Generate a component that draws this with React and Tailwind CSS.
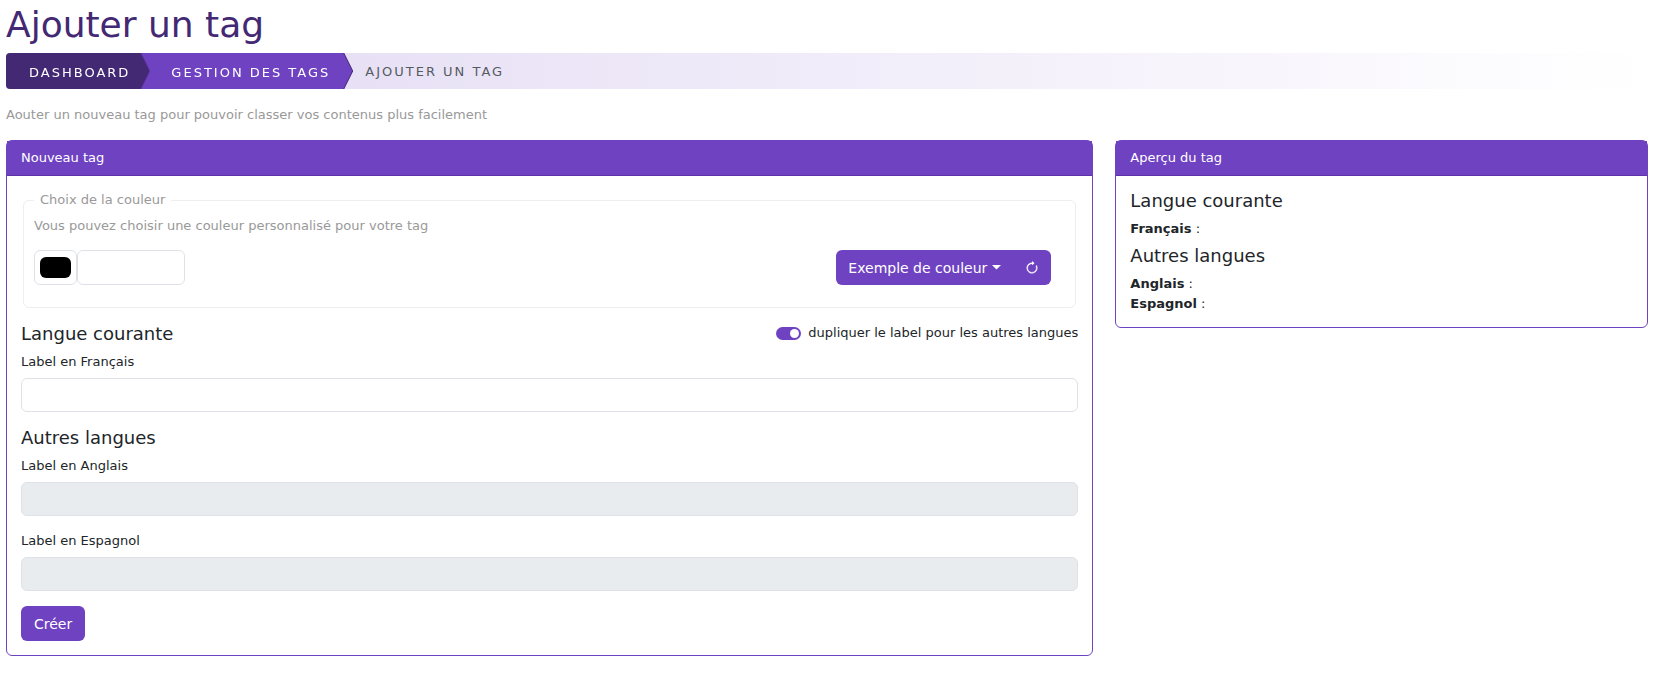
import { useState } from "react";

function Card({ title, children }) {
  return (
    <section className="self-start rounded-md border border-[#6f42c1] bg-white">
      <h2 className="border-b border-[#5c34a8] bg-[#6f42c1] px-3.5 py-2 text-[13px] leading-[18px] text-white">
        {title}
      </h2>
      {children}
    </section>
  );
}

function Subtitle({ children }) {
  return <h3 className="text-lg leading-5">{children}</h3>;
}

function Field({ id, label, disabled }) {
  return (
    <div>
      <label htmlFor={id} className="block leading-5">
        {label}
      </label>
      <input
        id={id}
        type="text"
        disabled={disabled}
        className="mt-1.5 block h-[34px] w-full rounded-md border border-[#dee2e6] bg-white px-3 text-sm disabled:bg-[#e9ecef]"
      />
    </div>
  );
}

function Crumbs() {
  return (
    <nav
      aria-label="Fil d'Ariane"
      className="h-9 overflow-hidden rounded-sm bg-linear-to-r from-[#e2d9f3] to-white text-[13px] leading-9 tracking-[2px] uppercase"
    >
      <ol className="flex">
        <li className="z-20 flex drop-shadow-[1px_0_0_#59359a]">
          <a
            href="#dashboard"
            className="bg-[#432874] pt-[3px] pr-[19px] pl-[23px] leading-[33px] text-white [clip-path:polygon(0_0,calc(100%-9px)_0,100%_50%,calc(100%-9px)_100%,0_100%)]"
          >
            Dashboard
          </a>
        </li>
        <li className="z-10 -ml-2.5 flex drop-shadow-[1px_0_0_#432874]">
          <a
            href="#tags"
            className="bg-[#6f42c1] pt-[3px] pr-[22px] pl-8 leading-[33px] text-white [clip-path:polygon(0_0,calc(100%-9px)_0,100%_50%,calc(100%-9px)_100%,0_100%)]"
          >
            Gestion des tags
          </a>
        </li>
        <li aria-current="page" className="pt-0.5 pl-[13px] leading-[34px] text-[#555b61]">
          Ajouter un tag
        </li>
      </ol>
    </nav>
  );
}

export default function App() {
  const [color, setColor] = useState("#000000");
  const [duplicate, setDuplicate] = useState(true);

  return (
    <main className="pr-[15px] pl-1.5 font-['DejaVu_Sans',Verdana,sans-serif] text-[13px] text-[#212529]">
      <h1 className="pt-0.5 pb-1.5 text-4xl leading-[45px] text-[#432874]">Ajouter un tag</h1>
      <Crumbs />
      <p className="py-4 leading-[19px] text-[#999999]">
        Aouter un nouveau tag pour pouvoir classer vos contenus plus facilement
      </p>

      <div className="grid grid-cols-3 gap-[22px]">
        <div className="col-span-2 grid">
          <Card title="Nouveau tag">
            <form className="p-3.5" onSubmit={(e) => e.preventDefault()}>
              <fieldset className="mx-0.5 rounded-md border border-[#eeeeee] px-2.5 pb-[22px]">
                <legend className="px-1.5 leading-5 text-[#999999]">Choix de la couleur</legend>
                <p className="pt-1.5 leading-5 text-[#999999]">
                  Vous pouvez choisir une couleur personnalisé pour votre tag
                </p>
                <div className="mt-3.5 flex items-center justify-between pr-3.5">
                  <div className="flex">
                    <input
                      type="color"
                      aria-label="Couleur"
                      value={color}
                      onChange={(e) => setColor(e.target.value)}
                      className="h-[35px] w-[43px] rounded-md border border-[#dee2e6] bg-white px-[5px] py-1.5 [&::-webkit-color-swatch]:rounded-md [&::-webkit-color-swatch]:border-0 [&::-webkit-color-swatch-wrapper]:p-0"
                    />
                    <input
                      type="text"
                      aria-label="Code de la couleur"
                      className="h-[35px] w-[108px] rounded-md border border-[#dee2e6] bg-white px-3 text-sm"
                    />
                  </div>
                  <div className="flex overflow-hidden rounded-md bg-[#6f42c1] text-white">
                    <button type="button" className="flex h-[35px] items-center gap-[5px] px-3 text-sm">
                      Exemple de couleur
                      <svg width="9" height="5" viewBox="0 0 9 5" fill="currentColor" aria-hidden="true">
                        <path d="M0 0h9L4.5 4.5z" />
                      </svg>
                    </button>
                    <button type="button" aria-label="Réinitialiser" className="h-[35px] px-3">
                      <svg width="14" height="14" viewBox="0 0 16 16" fill="currentColor" aria-hidden="true">
                        <path
                          fillRule="evenodd"
                          stroke="currentColor"
                          strokeWidth="0.5"
                          d="M8 3a5 5 0 1 0 4.546 2.914.5.5 0 0 1 .908-.417A6 6 0 1 1 8 2z"
                        />
                        <path d="M8 4.466V.534a.25.25 0 0 1 .41-.192l2.36 1.966c.12.1.12.284 0 .384L8.41 4.658A.25.25 0 0 1 8 4.466" />
                      </svg>
                    </button>
                  </div>
                </div>
              </fieldset>

              <div className="mt-[15px] mb-2 flex items-start justify-between">
                <div className="pt-px">
                  <Subtitle>Langue courante</Subtitle>
                </div>
                <label className="flex items-center gap-[7px] leading-5">
                  <input
                    type="checkbox"
                    role="switch"
                    checked={duplicate}
                    onChange={(e) => setDuplicate(e.target.checked)}
                    className="flex h-[13px] w-[25px] appearance-none items-center rounded-full bg-[#adb5bd] px-0.5 before:size-[9px] before:rounded-full before:bg-white checked:justify-end checked:bg-[#6f42c1]"
                  />
                  dupliquer le label pour les autres langues
                </label>
              </div>
              <Field id="label-fr" label="Label en Français" />

              <div className="mt-4 mb-2">
                <Subtitle>Autres langues</Subtitle>
              </div>
              <div className="grid gap-[15px]">
                <Field id="label-en" label="Label en Anglais" disabled={duplicate} />
                <Field id="label-es" label="Label en Espagnol" disabled={duplicate} />
              </div>

              <button
                type="submit"
                className="mt-[15px] block h-[35px] rounded-md bg-[#6f42c1] px-[13px] text-sm text-white"
              >
                Créer
              </button>
            </form>
          </Card>
        </div>

        <Card title="Aperçu du tag">
          <div className="px-3.5 pt-[15px] pb-[13px] leading-5">
            <Subtitle>Langue courante</Subtitle>
            <p className="mt-2 mb-[7px]">
              <strong>Français</strong> :
            </p>
            <Subtitle>Autres langues</Subtitle>
            <p className="mt-2">
              <strong>Anglais</strong> :
            </p>
            <p>
              <strong>Espagnol</strong> :
            </p>
          </div>
        </Card>
      </div>
    </main>
  );
}
